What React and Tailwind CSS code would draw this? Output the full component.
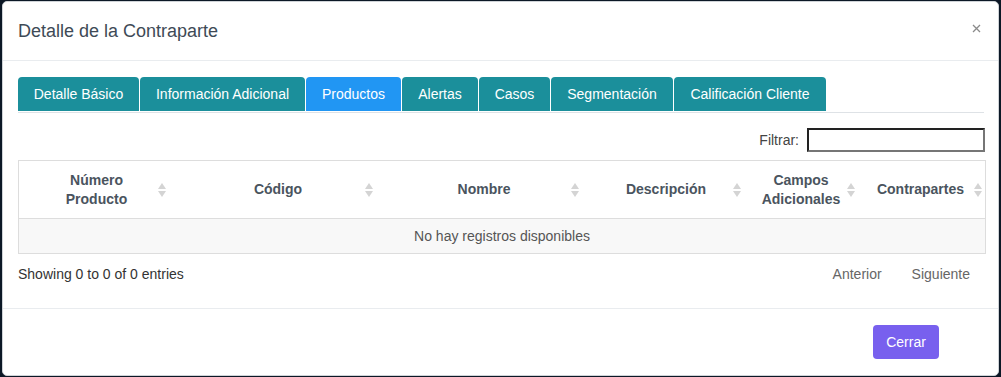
import React from 'react';

const tabs = [
  { label: 'Detalle Básico', w: 'w-[121px]' },
  { label: 'Información Adicional', w: 'w-[165px]' },
  { label: 'Productos', w: 'w-[95px]', active: true },
  { label: 'Alertas', w: 'w-[76px]' },
  { label: 'Casos', w: 'w-[71px]' },
  { label: 'Segmentación', w: 'w-[122px]' },
  { label: 'Calificación Cliente', w: 'w-[152px]' },
];

// label lines + where the sort arrows sit in that cell
const columns = [
  { lines: ['Número', 'Producto'], icon: 'right-[8px]' },
  { lines: ['Código'], icon: 'right-[9px]' },
  { lines: ['Nombre'], icon: 'right-[7px]' },
  { lines: ['Descripción'], icon: 'right-[5px]' },
  { lines: ['Campos', 'Adicionales'], icon: 'right-[1px]' },
  { lines: ['Contrapartes'], icon: 'right-[3px]' },
];

function SortIcon({ pos }) {
  return (
    <svg width="8" height="14" viewBox="0 0 8 14" className={`absolute ${pos} top-1/2 -translate-y-1/2`}>
      <path d="M4 0 L8 6 L0 6 Z" fill="#d4d4d4" />
      <path d="M4 14 L8 8 L0 8 Z" fill="#d4d4d4" />
    </svg>
  );
}

export default function App() {
  return (
    <div className="h-screen w-full bg-[#0c1826] pt-px pl-[2px] pr-[2px] font-['Liberation_Sans',Arial,sans-serif]">
      <div className="w-[997px] bg-white border border-[#cfd3d7] rounded-[5px] flex flex-col">
        {/* header */}
        <div className="h-[59px] flex items-center justify-between pl-[15px] pr-[17px] border-b border-[#e9ecef]">
          <h4 className="text-[18px] text-[#3e4a56] leading-none">Detalle de la Contraparte</h4>
          <svg width="9" height="9" viewBox="0 0 9 9" className="-mt-[6px]">
            <path d="M1 1 L8 8 M8 1 L1 8" stroke="#8a8a8a" strokeWidth="1.3" />
          </svg>
        </div>

        {/* body */}
        <div className="pt-4 pl-[15px] pr-[14px] pb-[24px]">
          <div className="flex items-end border-b border-[#dee2e6] w-[966px]">
            {tabs.map(t => (
              <div
                key={t.label}
                className={`${t.w} h-[34px] mb-px mr-px rounded-t-[4px] flex items-center justify-center text-[14px] text-white ${t.active ? 'bg-[#2196f3]' : 'bg-[#1b8f9b]'}`}
              >
                {t.label}
              </div>
            ))}
          </div>

          <div className="flex justify-end items-center mt-[15px] text-[14px] text-[#444] w-[967px]">
            <span className="mr-[8px]">Filtrar:</span>
            <input className="w-[178px] h-6 border-2 border-t-[#222] border-l-[#222] border-r-[#767676] border-b-[#767676] outline-none" />
          </div>

          <div className="mt-2 border border-[#dddddd] w-[968px]">
            <div className="grid grid-cols-[155px_208px_204px_160px_110px_1fr] h-[58px] border-b border-[#dddddd]">
              {columns.map((c, i) => (
                <div key={i} className="relative flex flex-col items-center justify-center text-center text-[14px] font-bold text-[#4a545e] leading-[19px]">
                  {c.lines.map(l => <span key={l}>{l}</span>)}
                  <SortIcon pos={c.icon} />
                </div>
              ))}
            </div>
            <div className="h-[34px] bg-[#f8f8f8] flex items-center justify-center text-[14px] text-[#555]">
              No hay registros disponibles
            </div>
          </div>

          <div className="mt-[10px] flex items-center justify-between leading-5 text-[14px] w-[968px]">
            <span className="text-[#333]">Showing 0 to 0 of 0 entries</span>
            <div className="flex text-[#666]">
              <span className="px-[15px]">Anterior</span>
              <span className="pl-[15px] pr-[16px]">Siguiente</span>
            </div>
          </div>
        </div>

        {/* footer */}
        <div className="border-t border-[#e9ecef] pt-4 pb-4 pr-[59px] flex justify-end">
          <button className="w-[66px] h-[34px] rounded-[4px] bg-[#7860ee] text-white text-[14px]">Cerrar</button>
        </div>
      </div>
    </div>
  );
}
